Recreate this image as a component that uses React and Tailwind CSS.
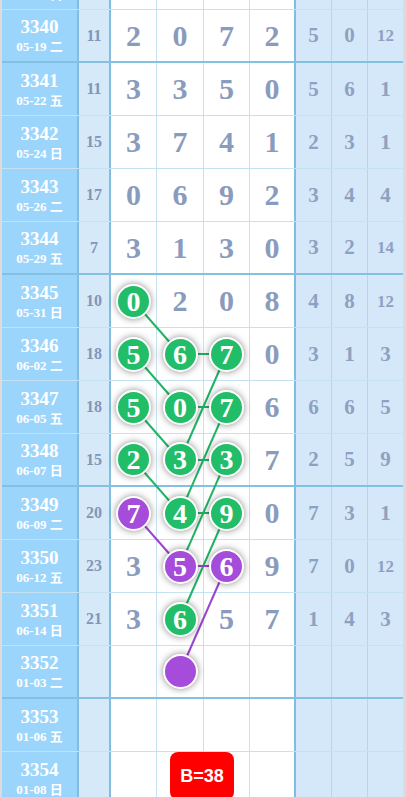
const rows = [
  { n: '3339', d: '05-17 日', a: '9', c: ['1', '4', '6', '2'], r: ['3', '7', '8'] },
  { n: '3340', d: '05-19 二', a: '11', c: ['2', '0', '7', '2'], r: ['5', '0', '12'] },
  { n: '3341', d: '05-22 五', a: '11', c: ['3', '3', '5', '0'], r: ['5', '6', '1'] },
  { n: '3342', d: '05-24 日', a: '15', c: ['3', '7', '4', '1'], r: ['2', '3', '1'] },
  { n: '3343', d: '05-26 二', a: '17', c: ['0', '6', '9', '2'], r: ['3', '4', '4'] },
  { n: '3344', d: '05-29 五', a: '7', c: ['3', '1', '3', '0'], r: ['3', '2', '14'] },
  { n: '3345', d: '05-31 日', a: '10', c: [['0', 'g'], '2', '0', '8'], r: ['4', '8', '12'] },
  { n: '3346', d: '06-02 二', a: '18', c: [['5', 'g'], ['6', 'g'], ['7', 'g'], '0'], r: ['3', '1', '3'] },
  { n: '3347', d: '06-05 五', a: '18', c: [['5', 'g'], ['0', 'g'], ['7', 'g'], '6'], r: ['6', '6', '5'] },
  { n: '3348', d: '06-07 日', a: '15', c: [['2', 'g'], ['3', 'g'], ['3', 'g'], '7'], r: ['2', '5', '9'] },
  { n: '3349', d: '06-09 二', a: '20', c: [['7', 'p'], ['4', 'g'], ['9', 'g'], '0'], r: ['7', '3', '1'] },
  { n: '3350', d: '06-12 五', a: '23', c: ['3', ['5', 'p'], ['6', 'p'], '9'], r: ['7', '0', '12'] },
  { n: '3351', d: '06-14 日', a: '21', c: ['3', ['6', 'g'], '5', '7'], r: ['1', '4', '3'] },
  { n: '3352', d: '01-03 二', a: '', c: ['', ['', 'p'], '', ''], r: ['', '', ''] },
  { n: '3353', d: '01-06 五', a: '', c: ['', '', '', ''], r: ['', '', ''] },
  { n: '3354', d: '01-08 日', a: '', c: ['', '', '', ''], r: ['', '', ''] },
]

const serif = { fontFamily: '"Liberation Serif", "Noto Sans CJK SC", serif' }

const digitW = ['w-[46px]', 'w-[47px]', 'w-[46px]', 'w-[46px]']
const colX = [133.5, 180, 226.5, 272]
const rowY = n => 10 + 53 * (n - 3340) + 26

const links = [
  [3345, 0, 3346, 1, 'g'], [3346, 1, 3346, 2, 'g'], [3346, 0, 3347, 1, 'g'],
  [3347, 1, 3347, 2, 'g'], [3346, 2, 3348, 1, 'g'], [3347, 0, 3348, 1, 'g'],
  [3348, 1, 3348, 2, 'g'], [3347, 2, 3349, 1, 'g'], [3348, 0, 3349, 1, 'g'],
  [3349, 1, 3349, 2, 'g'], [3348, 2, 3350, 1, 'g'], [3349, 2, 3351, 1, 'g'],
  [3349, 0, 3350, 1, 'p'], [3350, 1, 3350, 2, 'p'], [3350, 2, 3352, 1, 'p'],
]

function Ball({ v, kind }) {
  return (
    <div
      className={`relative z-10 w-[35px] h-[35px] rounded-full border-2 border-white flex items-center justify-center text-white text-[28px] font-bold leading-none shadow-[0_0_7px_rgba(0,0,0,0.45)] ${kind === 'g' ? 'bg-[#22bd68]' : 'bg-[#a64cdb]'}`}
    >
      <span className="mt-[1px]">{v}</span>
    </div>
  )
}

function Row({ row }) {
  const thick = Number(row.n) % 4 === 0
  return (
    <div className={`flex h-[53px] ${thick ? 'border-b-2 border-[#84c0e0]' : 'border-b border-[#c4e2f1]'}`}>
      {/* Issue + date */}
      <div className="w-[77px] bg-[#9cd5fc] border-r-2 border-[#80bddf] flex flex-col items-center justify-center text-white font-bold">
        <div className="text-[19px] leading-[21px]">{row.n}</div>
        <div className="text-[13px] leading-[16px] mt-[2px]">{row.d}</div>
      </div>
      <div className="w-[32px] bg-[#d6e9f9] border-r-2 border-[#80bddf] flex items-center justify-center text-[16px] font-bold text-[#8196b8]">
        {row.a}
      </div>

      {/* Numbers */}
      {row.c.map((c, i) => (
        <div
          key={i}
          className={`${digitW[i]} bg-white flex items-center justify-center ${i === 3 ? 'border-r-2 border-[#80bddf]' : 'border-r border-[#c4e2f1]'}`}
        >
          {Array.isArray(c) ? (
            <Ball v={c[0]} kind={c[1]} />
          ) : (
            <span className="text-[30px] font-bold text-[#8a9cbd] leading-none">{c}</span>
          )}
        </div>
      ))}

      {/* Right stats */}
      {row.r.map((v, i) => (
        <div
          key={i}
          className={`${i === 2 ? 'w-[35px]' : 'w-[36px] border-r border-[#b3d7ec]'} bg-[#d5e8f9] flex items-center justify-center font-bold text-[#8da1c1] leading-none ${v.length > 1 ? 'text-[17px]' : 'text-[21px]'}`}
        >
          {v}
        </div>
      ))}
    </div>
  )
}

export default function App() {
  return (
    <div className="relative w-[406px] h-[797px] overflow-hidden bg-[#dcdcdc] pl-[2px]" style={serif}>
      <div className="-mt-[43px] w-[401px]">
        {rows.map(row => (
          <Row key={row.n} row={row} />
        ))}
      </div>

      <svg className="absolute left-0 top-0 z-[5] pointer-events-none" width="406" height="797">
        {links.map(([r1, c1, r2, c2, k], i) => (
          <line
            key={i}
            x1={colX[c1]}
            y1={rowY(r1)}
            x2={colX[c2]}
            y2={rowY(r2)}
            stroke={k === 'g' ? '#22b466' : '#9a45cf'}
            strokeWidth="2"
          />
        ))}
      </svg>

      <div className="absolute left-[170px] top-[752px] z-10 w-[64px] h-[48px] rounded-lg bg-[#ff0000] flex items-center justify-center text-white text-[18px] font-bold" style={{ fontFamily: '"Liberation Sans", Arial, sans-serif' }}>
        B=38
      </div>
    </div>
  )
}
